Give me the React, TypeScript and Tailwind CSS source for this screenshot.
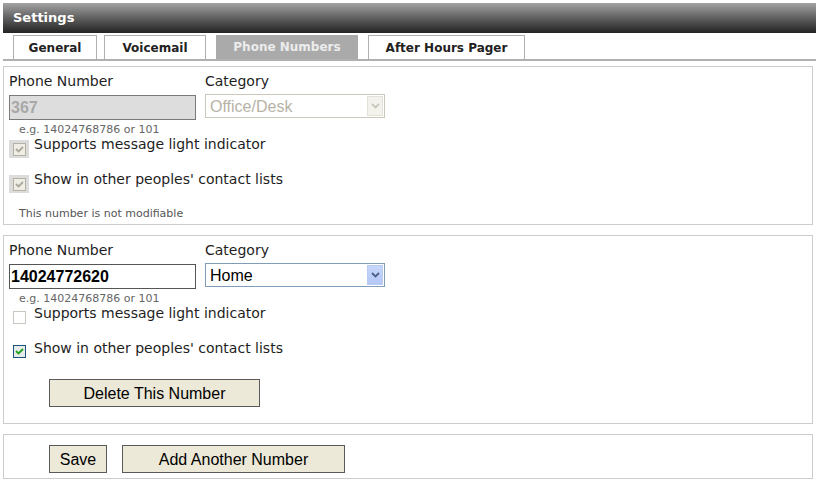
import React from "react";

const verdana = { fontFamily: '"DejaVu Sans", Verdana, sans-serif' };
const arial = { fontFamily: '"Liberation Sans", Arial, sans-serif' };

const Check = ({ color }: { color: string }) => (
  <svg width="9" height="9" viewBox="0 0 9 9">
    <path d="M1 4 L3.5 6.5 L8 2" fill="none" stroke={color} strokeWidth="1.8" />
  </svg>
);

const Chevron = ({ color }: { color: string }) => (
  <svg width="9" height="6" viewBox="0 0 9 6">
    <path d="M1 1 L4.5 4.5 L8 1" fill="none" stroke={color} strokeWidth="1.8" />
  </svg>
);

const DisabledBox = () => (
  <div className="w-[20px] h-[18px] bg-[#dcdcdc] flex items-center justify-center">
    <div className="w-[13px] h-[13px] border border-[#b5b2a4] bg-[#eeede6] flex items-center justify-center">
      <Check color="#aca899" />
    </div>
  </div>
);

const Box = ({ checked }: { checked: boolean }) =>
  checked ? (
    <div className="w-[13px] h-[13px] border border-[#1c5180] bg-[#e8ece6] flex items-center justify-center">
      <Check color="#21a121" />
    </div>
  ) : (
    <div className="w-[13px] h-[13px] border border-[#c8c8c0] bg-white" />
  );

const Tab = ({ label, w, active, className }: { label: string; w: string; active?: boolean; className?: string }) => (
  <div
    className={`${w} ${className} h-[24px] flex items-center justify-center text-[12px] font-bold ${
      active ? "bg-[#aaaaaa] text-[#ececec]" : "bg-white text-[#222] border border-b-0 border-[#b0b0b0]"
    }`}
  >
    {label}
  </div>
);

const Button = ({ label, w }: { label: string; w: string }) => (
  <div
    className={`${w} h-[28px] pt-[1px] bg-[#ece9d8] border border-[#5a5a5a] flex items-center justify-center text-[16px] text-black`}
    style={arial}
  >
    {label}
  </div>
);

export default function App() {
  return (
    <div className="w-[816px] h-[483px] bg-white pt-[3px] pl-[3px] text-[#1e1e1e]" style={verdana}>
      <div className="h-[30px] bg-gradient-to-b from-[#a4a4a4] to-[#242424] flex items-center pl-[10px] text-[13px] font-bold text-white">
        Settings
      </div>
      <div className="flex mt-[2px] pl-[10px]">
        <Tab label="General" w="w-[84px]" />
        <Tab label="Voicemail" w="w-[102px]" className="ml-[7px]" />
        <Tab label="Phone Numbers" w="w-[142px]" active className="ml-[10px]" />
        <Tab label="After Hours Pager" w="w-[157px]" className="ml-[10px]" />
      </div>
      <div className="h-[2px] bg-[#b0b0b0]" />

      <div className="pr-[3px]">
        {/* fixed number */}
        <div className="mt-[5px] border border-[#cccccc] pt-[6px] pl-[5px] h-[159px]">
          <div className="flex text-[14px] leading-[17px]">
            <div className="w-[196px]">
              <div>Phone Number</div>
              <div
                className="mt-[5px] w-[187px] h-[25px] bg-[#dddddd] border border-[#7a7a7a] flex items-center pl-[1px] text-[16px] font-bold text-[#a8a8a8]"
                style={arial}
              >
                367
              </div>
              <div className="mt-[4px] pl-[10px] text-[11px] leading-[12px] text-[#666]">e.g. 14024768786 or 101</div>
            </div>
            <div>
              <div>Category</div>
              <div
                className="mt-[4px] w-[180px] h-[24px] border border-[#cbc8bb] flex items-center justify-between pl-[4px] pr-[1px] text-[16px] text-[#b6b3a6]"
                style={arial}
              >
                Office/Desk
                <div className="w-[16px] h-[20px] bg-[#f3f2ed] border border-[#e3e1d8] flex items-center justify-center">
                  <Chevron color="#c9c7ba" />
                </div>
              </div>
            </div>
          </div>
          <div className="flex h-[35px] text-[14px] leading-[17px]">
            <div className="w-[25px] pt-[4px]">
              <DisabledBox />
            </div>
            <div>Supports message light indicator</div>
          </div>
          <div className="flex h-[37px] text-[14px] leading-[17px]">
            <div className="w-[25px] pt-[4px]">
              <DisabledBox />
            </div>
            <div>Show in other peoples' contact lists</div>
          </div>
          <div className="pl-[10px] text-[11px] leading-[12px] text-[#555]">This number is not modifiable</div>
        </div>

        {/* editable number */}
        <div className="mt-[10px] border border-[#cccccc] pt-[6px] pl-[5px] h-[189px]">
          <div className="flex text-[14px] leading-[17px]">
            <div className="w-[196px]">
              <div>Phone Number</div>
              <div
                className="mt-[5px] w-[187px] h-[25px] bg-white border border-[#555] flex items-center pl-[1px] text-[16px] font-bold text-black"
                style={arial}
              >
                14024772620
              </div>
              <div className="mt-[4px] pl-[10px] text-[11px] leading-[12px] text-[#666]">e.g. 14024768786 or 101</div>
            </div>
            <div>
              <div>Category</div>
              <div
                className="mt-[4px] w-[180px] h-[24px] border border-[#7f9db9] flex items-center justify-between pl-[4px] pr-[1px] text-[16px] text-black"
                style={arial}
              >
                Home
                <div className="w-[16px] h-[20px] bg-gradient-to-b from-[#c6d6fb] to-[#b4c8f6] border border-[#b9cbf3] flex items-center justify-center">
                  <Chevron color="#4d6185" />
                </div>
              </div>
            </div>
          </div>
          <div className="flex h-[35px] text-[14px] leading-[17px]">
            <div className="w-[25px] pt-[6px] pl-[4px]">
              <Box checked={false} />
            </div>
            <div>Supports message light indicator</div>
          </div>
          <div className="flex h-[39px] text-[14px] leading-[17px]">
            <div className="w-[25px] pt-[5px] pl-[4px]">
              <Box checked />
            </div>
            <div>Show in other peoples' contact lists</div>
          </div>
          <div className="pl-[40px]">
            <Button label="Delete This Number" w="w-[211px]" />
          </div>
        </div>

        {/* actions */}
        <div className="mt-[10px] border border-[#cccccc] h-[45px] pl-[45px] pt-[10px] flex gap-[15px] items-start">
          <Button label="Save" w="w-[58px]" />
          <Button label="Add Another Number" w="w-[223px]" />
        </div>
      </div>
    </div>
  );
}
